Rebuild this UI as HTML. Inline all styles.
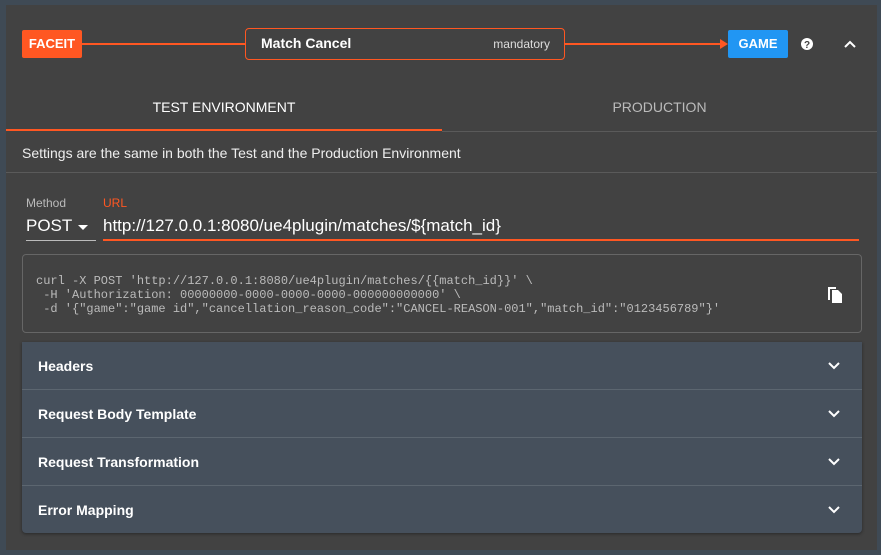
<!DOCTYPE html>
<html><head><style>
*{box-sizing:border-box;margin:0;padding:0}
body{width:881px;height:555px;background:#3f4a55;font-family:"Liberation Sans Narrow","Liberation Sans",sans-serif;color:#fff;position:relative;overflow:hidden}
.panel{position:absolute;left:6px;top:5px;width:871px;height:545px;background:#424242}
.abs{position:absolute}
.line{position:absolute;height:2px;background:#ff5722}
.acc{position:absolute;left:16px;top:337px;width:840px;height:191px;background:#46505c;border-radius:0 0 4px 4px;box-shadow:0 1px 3px rgba(0,0,0,.4)}
.row{height:48px;border-bottom:1px solid #5c6670;display:flex;align-items:center;padding-left:16px;font-weight:bold;font-size:14px;position:relative}
.row:last-child{border-bottom:none}
.row svg{position:absolute;right:22px;top:20px}
</style></head><body>
<div class="panel">
 <div class="abs" style="left:16px;top:25px;width:60px;height:28px;background:#ff5722;border-radius:2px;font-weight:bold;font-size:13px;text-align:center;line-height:28px">FACEIT</div>
 <div class="line" style="left:76px;top:38px;width:163px"></div>
 <div class="abs" style="left:239px;top:23px;width:320px;height:32px;border:1px solid #ff5722;border-radius:4px">
  <span class="abs" style="left:15px;top:6px;font-weight:bold;font-size:14px">Match Cancel</span>
  <span class="abs" style="right:14px;top:8px;font-size:12px;color:#ddd">mandatory</span>
 </div>
 <div class="line" style="left:559px;top:38px;width:158px"></div>
 <svg class="abs" style="left:714px;top:34px" width="8" height="10"><path d="M0 0L8 5L0 10Z" fill="#ff5722"/></svg>
 <div class="abs" style="left:722px;top:25px;width:60px;height:28px;background:#2196f3;border-radius:2px;font-weight:bold;font-size:13px;text-align:center;line-height:28px">GAME</div>
 <svg class="abs" style="left:795px;top:33px" width="12" height="12"><circle cx="6" cy="6" r="6" fill="#fff"/><text x="6" y="10" font-size="10" font-weight="bold" text-anchor="middle" fill="#424242" font-family="Liberation Sans">?</text></svg>
 <svg class="abs" style="left:838px;top:34px" width="12" height="10"><path d="M1 8L6 3L11 8" stroke="#fff" stroke-width="2" fill="none"/></svg>
 <div class="abs" style="left:0;top:94px;width:436px;text-align:center;font-size:14px;color:#fff">TEST ENVIRONMENT</div>
 <div class="abs" style="left:436px;top:94px;width:435px;text-align:center;font-size:14px;color:#bbb">PRODUCTION</div>
 <div class="abs" style="left:0;top:124px;width:436px;height:2px;background:#ff5722"></div>
 <div class="abs" style="left:436px;top:126px;width:435px;height:1px;background:#5a5a5a"></div>
 <div class="abs" style="left:16px;top:140px;font-size:14px;color:#eee">Settings are the same in both the Test and the Production Environment</div>
 <div class="abs" style="left:0;top:167px;width:871px;height:1px;background:#5a5a5a"></div>
 <div class="abs" style="left:20px;top:191px;font-size:12px;color:#bbb">Method</div>
 <div class="abs" style="left:97px;top:191px;font-size:12px;color:#ff5722">URL</div>
 <div class="abs" style="left:20px;top:211px;font-size:17px">POST</div>
 <svg class="abs" style="left:72px;top:220px" width="10" height="6"><path d="M0 0H10L5 5Z" fill="#fff"/></svg>
 <div class="abs" style="left:20px;top:235px;width:70px;height:1px;background:#bbb"></div>
 <div class="abs" style="left:97px;top:211px;font-size:17px">http://127.0.0.1:8080/ue4plugin/matches/${match_id}</div>
 <div class="abs" style="left:97px;top:234px;width:756px;height:2px;background:#ff5722"></div>
 <div class="abs" style="left:16px;top:249px;width:840px;height:79px;border:1px solid #666;border-radius:4px">
  <pre class="abs" style="left:13px;top:19px;font-family:'Liberation Mono',monospace;font-size:12px;line-height:14px;color:#bbb">curl -X POST 'http://127.0.0.1:8080/ue4plugin/matches/{{match_id}}' \
 -H 'Authorization: 00000000-0000-0000-0000-000000000000' \
 -d '{"game":"game id","cancellation_reason_code":"CANCEL-REASON-001","match_id":"0123456789"}'</pre>
  <svg class="abs" style="left:804px;top:30px" width="16" height="18"><path d="M1 2H9V4H3V15H1Z" fill="#fff"/><path d="M5 5H11L15 9V18H5Z" fill="#fff"/></svg>
 </div>
 <div class="acc">
  <div class="row">Headers<svg width="12" height="8"><path d="M1 1L6 6L11 1" stroke="#fff" stroke-width="2" fill="none"/></svg></div>
  <div class="row">Request Body Template<svg width="12" height="8"><path d="M1 1L6 6L11 1" stroke="#fff" stroke-width="2" fill="none"/></svg></div>
  <div class="row">Request Transformation<svg width="12" height="8"><path d="M1 1L6 6L11 1" stroke="#fff" stroke-width="2" fill="none"/></svg></div>
  <div class="row">Error Mapping<svg width="12" height="8"><path d="M1 1L6 6L11 1" stroke="#fff" stroke-width="2" fill="none"/></svg></div>
 </div>
</div>
</body></html>
